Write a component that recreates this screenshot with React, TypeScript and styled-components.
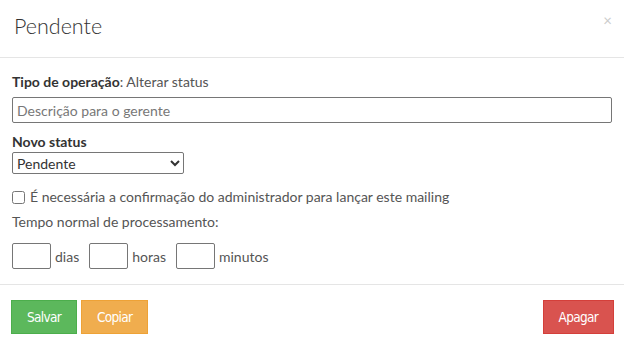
import { createGlobalStyle, styled } from "styled-components";

const Global = createGlobalStyle`
  body {
    margin: 0;
    background: #fff;
    font-family: Lato, "Open Sans", sans-serif;
    color: #333;
  }
`;

export default function App() {
  return (
    <>
      <Global />
      <Modal>
        <Header>
          <Title>Pendente</Title>
          <Close>×</Close>
        </Header>
        <Body>
          <Label>
            <b>Tipo de operação</b>: Alterar status
          </Label>
          <TextInput placeholder="Descrição para o gerente" />
          <Label $gap={10}>
            <b>Novo status</b>
          </Label>
          <Select defaultValue="Pendente">
            <option>Pendente</option>
          </Select>
          <CheckRow>
            <input type="checkbox" />
            É necessária a confirmação do administrador para lançar este mailing
          </CheckRow>
          <Label $gap={7}>Tempo normal de processamento:</Label>
          <TimeRow>
            <SmallInput />
            <span>dias</span>
            <SmallInput />
            <span>horas</span>
            <SmallInput />
            <span>minutos</span>
          </TimeRow>
        </Body>
        <Footer>
          <Button $bg="#5cb85c" $border="#4cae4c">Salvar</Button>
          <Button $bg="#f0ad4e" $border="#eea236">Copiar</Button>
          <Spacer />
          <Button $bg="#d9534f" $border="#d43f3a">Apagar</Button>
        </Footer>
      </Modal>
    </>
  );
}

const Modal = styled.div`
  width: 624px;
  height: 348px;
  display: flex;
  flex-direction: column;
  overflow: hidden;
`;

const Header = styled.div`
  flex-shrink: 0;
  height: 58px;
  box-sizing: border-box;
  border-bottom: 1px solid #e5e5e5;
  padding: 11px 14px 0;
  display: flex;
  justify-content: space-between;
`;

const Title = styled.h4`
  margin: 0;
  font-size: 21.5px;
  font-weight: 300;
  line-height: 30px;
  color: #333;
`;

const Close = styled.span`
  font-size: 15px;
  color: #ccc;
  line-height: 16px;
  margin-top: 1px;
  margin-right: -2px;
`;

const Body = styled.div`
  flex-shrink: 0;
  padding: 15px 12px 0;
  height: 227px;
  box-sizing: border-box;
  border-bottom: 1px solid #e5e5e5;
  display: flex;
  flex-direction: column;
  font-size: 14px;
`;

const Label = styled.div<{ $gap?: number }>`
  margin-top: ${(p) => p.$gap ?? 0}px;
  line-height: 18px;
  color: #555;

  & b {
    color: #333;
    font-weight: 700;
  }
`;

const TextInput = styled.input`
  margin-top: 6px;
  height: 26px;
  box-sizing: border-box;
  border: 1px solid #767676;
  border-radius: 2px;
  padding: 0 4px;
  font-family: inherit;
  font-size: 14px;
  &::placeholder {
    color: #777;
  }
`;

const Select = styled.select`
  margin-top: 1px;
  width: 172px;
  height: 22px;
  box-sizing: border-box;
  border: 1px solid #767676;
  border-radius: 2px;
  font-family: inherit;
  font-size: 14px;
  color: #333;
  background: #fff;
`;

const CheckRow = styled.label`
  margin-top: 14px;
  display: flex;
  align-items: center;
  gap: 3px;
  line-height: 18px;
  color: #555;

  & input {
    margin: 0 2px 0 0;
    width: 13px;
    height: 13px;
  }
`;

const TimeRow = styled.div`
  margin-top: 12px;
  display: flex;
  align-items: center;
  gap: 4px;
  color: #555;

  & span {
    margin-right: 6px;
  }
`;

const SmallInput = styled.input`
  width: 39px;
  height: 26px;
  box-sizing: border-box;
  border: 1px solid #767676;
  border-radius: 2px;
`;

const Footer = styled.div`
  padding: 15px 10px 14px 11px;
  display: flex;
  gap: 4px;
`;

const Spacer = styled.div`
  flex: 1;
`;

const Button = styled.button<{ $bg: string; $border: string }>`
  height: 34px;
  padding: 0 15px;
  background: ${(p) => p.$bg};
  border: 1px solid ${(p) => p.$border};
  border-radius: 0;
  color: #fff;
  font-family: "DejaVu Sans Condensed", "Liberation Sans", sans-serif;
  font-size: 13.5px;
  letter-spacing: -0.7px;
`;
